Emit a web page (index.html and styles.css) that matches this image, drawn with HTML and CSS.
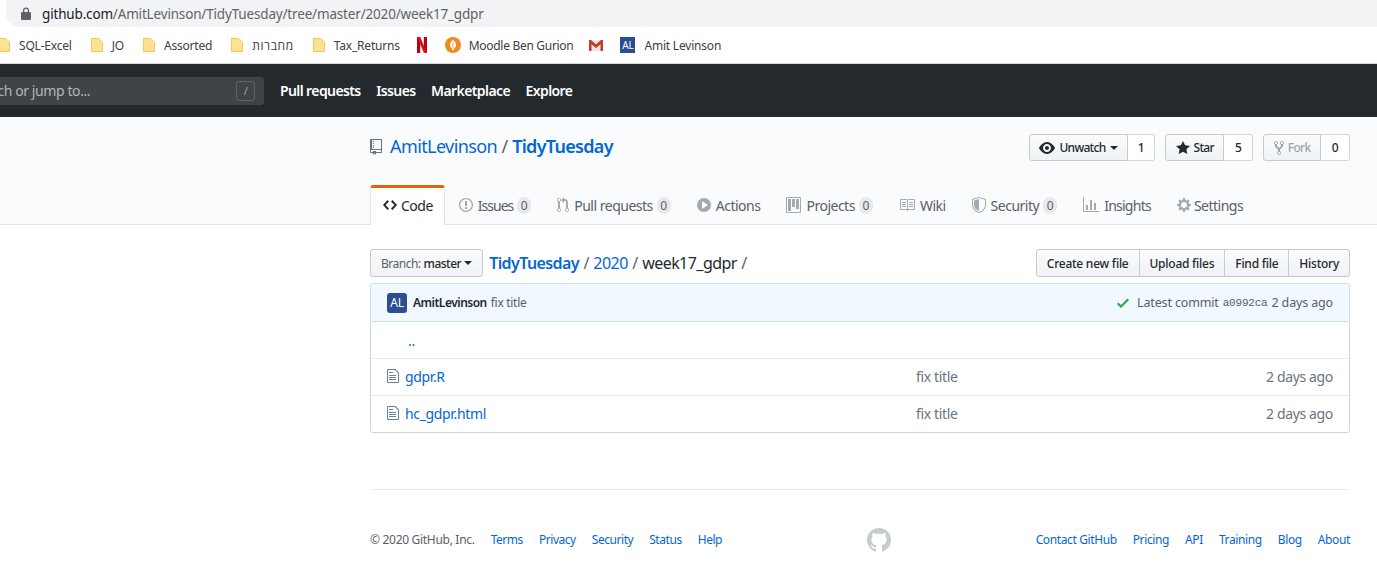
FILE: index.html
```html
<!DOCTYPE html>
<html>
<head>
    <meta charset="UTF-8">
    <title>TidyTuesday/2020/week17_gdpr at master</title>
    <link rel="stylesheet" href="styles.css">
</head>
<body>
    <svg class="defs" width="0" height="0">
        <symbol id="i-repo" viewBox="0 0 12 16"><path d="M4 9H3V8h1v1zm0-3H3v1h1V6zm0-2H3v1h1V4zm0-2H3v1h1V2zm8-1v12c0 .55-.45 1-1 1H6v2l-1.5-1.5L3 16v-2H1c-.55 0-1-.45-1-1V1c0-.55.45-1 1-1h10c.55 0 1 .45 1 1zm-1 10H1v2h2v-1h3v1h5v-2zm0-10H2v9h9V1z"/></symbol>
        <symbol id="i-code" viewBox="0 0 14 16"><path d="M9.5 3L8 4.5 11.5 8 8 11.5 9.5 13 14 8 9.5 3zm-5 0L0 8l4.5 5L6 11.5 2.5 8 6 4.5 4.5 3z"/></symbol>
        <symbol id="i-issue" viewBox="0 0 14 16"><path d="M7 2.3c3.14 0 5.7 2.56 5.7 5.7s-2.56 5.7-5.7 5.7A5.71 5.71 0 011.3 8c0-3.14 2.56-5.7 5.7-5.7zM7 1C3.14 1 0 4.14 0 8s3.14 7 7 7 7-3.14 7-7-3.14-7-7-7zm1 3H6v5h2V4zm0 6H6v2h2v-2z"/></symbol>
        <symbol id="i-pr" viewBox="0 0 12 16"><path d="M11 11.28V5c-.03-.78-.34-1.47-.94-2.06C9.46 2.35 8.78 2.03 8 2H7V0L4 3l3 3V4h1c.27.02.48.11.69.31.21.2.3.42.31.69v6.28A1.993 1.993 0 0010 15a1.993 1.993 0 001-3.72zm-1 2.92c-.66 0-1.2-.55-1.2-1.2 0-.65.55-1.2 1.2-1.2.65 0 1.2.55 1.2 1.2 0 .65-.55 1.2-1.2 1.2zM4 3c0-1.11-.89-2-2-2a1.993 1.993 0 00-1 3.72v6.56A1.993 1.993 0 002 15a1.993 1.993 0 001-3.72V4.72c.59-.34 1-.98 1-1.72zm-.8 10c0 .66-.55 1.2-1.2 1.2-.65 0-1.2-.55-1.2-1.2 0-.65.55-1.2 1.2-1.2.65 0 1.2.55 1.2 1.2zM2 4.2C1.34 4.2.8 3.65.8 3c0-.65.55-1.2 1.2-1.2.65 0 1.2.55 1.2 1.2 0 .65-.55 1.2-1.2 1.2z"/></symbol>
        <symbol id="i-play" viewBox="0 0 14 16"><path fill-rule="evenodd" d="M14 8A7 7 0 110 8a7 7 0 0114 0zm-8.223 3.482l4.599-3.066a.5.5 0 000-.832L5.777 4.518A.5.5 0 005 4.934v6.132a.5.5 0 00.777.416z"/></symbol>
        <symbol id="i-project" viewBox="0 0 15 16"><path fill-rule="evenodd" d="M10 12h3V2h-3v10zm-4-2h3V2H6v8zm-4 4h3V2H2v12zm-1 1h13V1H1v14zM14 0H1a1 1 0 00-1 1v14a1 1 0 001 1h13a1 1 0 001-1V1a1 1 0 00-1-1z"/></symbol>
        <symbol id="i-book" viewBox="0 0 16 16"><path d="M3 5h4v1H3V5zm0 3h4V7H3v1zm0 2h4V9H3v1zm11-5h-4v1h4V5zm0 2h-4v1h4V7zm0 2h-4v1h4V9zm2-6v9c0 .55-.45 1-1 1H9.5l-1 1-1-1H2c-.55 0-1-.45-1-1V3c0-.55.45-1 1-1h5.5l1 1 1-1H15c.55 0 1 .45 1 1zm-8 .5L7.5 3H2v9h6V3.5zm7-.5H9.5l-.5.5V12h6V3z"/></symbol>
        <symbol id="i-shield" viewBox="0 0 14 16"><path fill-rule="evenodd" d="M0 2l7-2 7 2v6.02C14 12.69 8.69 16 7 16c-1.69 0-7-3.31-7-7.98V2zm1 .75L7 1l6 1.75v5.268C13 12.104 8.449 15 7 15c-1.449 0-6-2.896-6-6.982V2.75zm1 .75L7 2v12c-1.207 0-5-2.482-5-5.985V3.5z"/></symbol>
        <symbol id="i-graph" viewBox="0 0 16 16"><path d="M16 14v1H0V0h1v14h15zM5 13H3V8h2v5zm4 0H7V3h2v10zm4 0h-2V6h2v7z"/></symbol>
        <symbol id="i-gear" viewBox="0 0 14 16"><path d="M14 8.77v-1.6l-1.94-.64-.45-1.09.88-1.84-1.13-1.13-1.81.91-1.09-.45-.69-1.92h-1.6l-.63 1.94-1.11.45-1.84-.88-1.13 1.13.91 1.81-.45 1.09L0 7.23v1.59l1.94.64.45 1.09-.88 1.84 1.13 1.13 1.81-.91 1.09.45.69 1.92h1.59l.63-1.94 1.11-.45 1.84.88 1.13-1.13-.92-1.81.47-1.09L14 8.75v.02zM7 11c-1.66 0-3-1.34-3-3s1.34-3 3-3 3 1.34 3 3-1.34 3-3 3z"/></symbol>
        <symbol id="i-eye" viewBox="0 0 16 16"><path d="M8.06 2C3 2 0 8 0 8s3 6 8.06 6C13 14 16 8 16 8s-3-6-7.94-6zM8 12c-2.2 0-4-1.78-4-4 0-2.2 1.8-4 4-4 2.22 0 4 1.8 4 4 0 2.22-1.78 4-4 4zm2-4c0 1.11-.89 2-2 2-1.11 0-2-.89-2-2 0-1.11.89-2 2-2 1.11 0 2 .89 2 2z"/></symbol>
        <symbol id="i-star" viewBox="0 0 14 16"><path d="M14 6l-4.9-.64L7 1 4.9 5.36 0 6l3.6 3.26L2.67 14 7 11.67 11.33 14l-.93-4.74L14 6z"/></symbol>
        <symbol id="i-fork" viewBox="0 0 10 16"><path d="M8 1a1.993 1.993 0 00-1 3.72V6L5 8 3 6V4.72A1.993 1.993 0 002 1a1.993 1.993 0 00-1 3.72V6.5l3 3v1.78A1.993 1.993 0 005 15a1.993 1.993 0 001-3.72V9.5l3-3V4.72A1.993 1.993 0 008 1zM2 4.2C1.34 4.2.8 3.65.8 3c0-.65.55-1.2 1.2-1.2.65 0 1.2.55 1.2 1.2 0 .65-.55 1.2-1.2 1.2zm3 10c-.66 0-1.2-.55-1.2-1.2 0-.65.55-1.2 1.2-1.2.65 0 1.2.55 1.2 1.2 0 .65-.55 1.2-1.2 1.2zm3-10c-.66 0-1.2-.55-1.2-1.2 0-.65.55-1.2 1.2-1.2.65 0 1.2.55 1.2 1.2 0 .65-.55 1.2-1.2 1.2z"/></symbol>
        <symbol id="i-file" viewBox="0 0 12 16"><path d="M6 5H2V4h4v1zM2 8h7V7H2v1zm0 2h7V9H2v1zm0 2h7v-1H2v1zm10-7.5V14c0 .55-.45 1-1 1H1c-.55 0-1-.45-1-1V2c0-.55.45-1 1-1h7.5L12 4.5zM11 5L8 2H1v12h10V5z"/></symbol>
        <symbol id="i-check" viewBox="0 0 12 16"><path d="M12 5l-8 8-4-4 1.5-1.5L4 10l6.5-6.5L12 5z"/></symbol>
        <symbol id="i-mark" viewBox="0 0 16 16"><path d="M8 0C3.58 0 0 3.58 0 8c0 3.54 2.29 6.53 5.47 7.59.4.07.55-.17.55-.38 0-.19-.01-.82-.01-1.49-2.01.37-2.53-.49-2.69-.94-.09-.23-.48-.94-.82-1.13-.28-.15-.68-.52-.01-.53.63-.01 1.08.58 1.23.82.72 1.21 1.87.87 2.33.66.07-.52.28-.87.51-1.07-1.78-.2-3.64-.89-3.64-3.95 0-.87.31-1.59.82-2.15-.08-.2-.36-1.02.08-2.12 0 0 .67-.21 2.2.82.64-.18 1.32-.27 2-.27.68 0 1.36.09 2 .27 1.53-1.04 2.2-.82 2.2-.82.44 1.1.16 1.92.08 2.12.51.56.82 1.27.82 2.15 0 3.07-1.87 3.75-3.65 3.95.29.25.54.73.54 1.48 0 1.07-.01 1.93-.01 2.2 0 .21.15.46.55.38A8.013 8.013 0 0016 8c0-4.42-3.58-8-8-8z"/></symbol>
        <symbol id="i-folder" viewBox="0 0 14 16"><path fill="#fde293" stroke="#f2c94c" d="M1.5 1.500h7l4 3.500v9.500h-11z"/></symbol>
    </svg>

    <div class="omnibox">
        <svg class="lock" viewBox="0 0 10 13" width="10" height="13"><path d="M2 5V3.500a3 3 0 016 0V5h1a1 1 0 011 1v6a1 1 0 01-1 1H1a1 1 0 01-1-1V6a1 1 0 011-1zm1.300 0h3.400V3.500a1.700 1.700 0 00-3.400 0z"/></svg>
        <span class="url"><b>github.com</b>/AmitLevinson/TidyTuesday/tree/master/2020/week17_gdpr</span>
    </div>

    <div class="bookmarks">
        <a class="bm bm-first"><svg class="folder"><use href="#i-folder"/></svg>SQL-Excel</a>
        <a class="bm"><svg class="folder"><use href="#i-folder"/></svg>JO</a>
        <a class="bm"><svg class="folder"><use href="#i-folder"/></svg>Assorted</a>
        <a class="bm"><svg class="folder"><use href="#i-folder"/></svg><span class="bm-he" dir="rtl">מחברות</span></a>
        <a class="bm"><svg class="folder"><use href="#i-folder"/></svg>Tax_Returns</a>
        <a class="bm bm-netflix"><svg viewBox="0 0 10 16" width="10" height="16"><path fill="#b1060f" d="M0 0h3.200v16L0 16z"/><path fill="#b1060f" d="M6.800 0H10v16l-3.200-.4z"/><path fill="#e50914" d="M0 0h3.200l6.800 16-3.200-.4z"/></svg></a>
        <a class="bm"><svg viewBox="0 0 16 16" width="16" height="16"><circle cx="8" cy="8" r="8" fill="#f28a1c"/><path fill="#fff" d="M8 2.500c2 2 3 3.500 3 5.500 0 1.700-1 3-2 3.500V13H7v-1.500C6 11 5 9.700 5 8c0-2 1-3.500 3-5.500z"/><path fill="#f28a1c" d="M7.600 5h.8v6h-.8z"/></svg><span class="bm-moodle">Moodle Ben Gurion</span></a>
        <a class="bm bm-gmail"><svg viewBox="0 0 14 11" width="14" height="11"><path fill="#e8e8e8" d="M0 0h14v11H0z"/><path fill="#c9362b" d="M0 0h2l5 4.500L12 0h2v11h-2.500V4.300L7 8 2.500 4.300V11H0z"/></svg></a>
        <a class="bm"><span class="bm-al">AL</span>Amit Levinson</a>
    </div>

    <header class="topnav">
        <div class="search">
            <span>Search or jump to...</span>
            <kbd>/</kbd>
        </div>
        <a>Pull requests</a>
        <a>Issues</a>
        <a>Marketplace</a>
        <a>Explore</a>
    </header>

    <section class="pagehead">
        <div class="container">
            <div class="repo-row">
                <h1 class="repo-title">
                    <svg class="ico-grey" width="12" height="16"><use href="#i-repo"/></svg>
                    <a>AmitLevinson</a><span class="sep">/</span><a class="strong">TidyTuesday</a>
                </h1>
                <div class="actions">
                    <div class="btn-group">
                        <a class="btn"><svg width="16" height="16"><use href="#i-eye"/></svg>Unwatch<i class="caret"></i></a>
                        <a class="count count-sm">1</a>
                    </div>
                    <div class="btn-group">
                        <a class="btn"><svg width="14" height="16"><use href="#i-star"/></svg>Star</a>
                        <a class="count">5</a>
                    </div>
                    <div class="btn-group">
                        <a class="btn disabled"><svg width="10" height="16"><use href="#i-fork"/></svg>Fork</a>
                        <a class="count">0</a>
                    </div>
                </div>
            </div>
            <nav class="tabs">
                <a class="tab selected"><svg width="14" height="16"><use href="#i-code"/></svg>Code</a>
                <a class="tab tab-issues"><svg width="14" height="16"><use href="#i-issue"/></svg>Issues<span class="counter">0</span></a>
                <a class="tab"><svg width="12" height="16"><use href="#i-pr"/></svg>Pull requests<span class="counter">0</span></a>
                <a class="tab"><svg width="14" height="16"><use href="#i-play"/></svg>Actions</a>
                <a class="tab"><svg width="15" height="16"><use href="#i-project"/></svg>Projects<span class="counter">0</span></a>
                <a class="tab"><svg width="16" height="16"><use href="#i-book"/></svg>Wiki</a>
                <a class="tab"><svg width="14" height="16"><use href="#i-shield"/></svg>Security<span class="counter">0</span></a>
                <a class="tab tab-insights"><svg width="16" height="16"><use href="#i-graph"/></svg>Insights</a>
                <a class="tab tab-settings"><svg width="14" height="16"><use href="#i-gear"/></svg>Settings</a>
            </nav>
        </div>
    </section>

    <main class="container">
        <div class="file-nav">
            <a class="btn branch"><span class="branch-label">Branch:</span> master<i class="caret"></i></a>
            <div class="crumbs">
                <a class="strong">TidyTuesday</a><span class="sep">/</span><a>2020</a><span class="sep">/</span><b>week17_gdpr</b><span class="sep">/</span>
            </div>
            <div class="file-btns">
                <a class="btn">Create new file</a>
                <a class="btn">Upload files</a>
                <a class="btn">Find file</a>
                <a class="btn">History</a>
            </div>
        </div>

        <div class="commit-tease">
            <span class="avatar">AL</span>
            <a class="author">AmitLevinson</a>
            <span class="msg">fix title</span>
            <span class="latest">
                <svg class="check" width="12" height="16"><use href="#i-check"/></svg>
                Latest commit <code>a0992ca</code> 2 days ago
            </span>
        </div>
        <div class="files">
            <div class="row up"><a>..</a></div>
            <div class="row">
                <span class="name"><svg width="12" height="16"><use href="#i-file"/></svg><a>gdpr.R</a></span>
                <span class="message">fix title</span>
                <span class="age">2 days ago</span>
            </div>
            <div class="row">
                <span class="name"><svg width="12" height="16"><use href="#i-file"/></svg><a>hc_gdpr.html</a></span>
                <span class="message">fix title</span>
                <span class="age">2 days ago</span>
            </div>
        </div>

        <footer class="footer">
            <div class="foot-links">
                <span class="copy">© 2020 GitHub, Inc.</span>
                <a>Terms</a><a>Privacy</a><a>Security</a><a>Status</a><a>Help</a>
            </div>
            <svg class="foot-mark" width="24" height="24"><use href="#i-mark"/></svg>
            <div class="foot-links foot-right">
                <a>Contact GitHub</a><a>Pricing</a><a>API</a><a>Training</a><a>Blog</a><a>About</a>
            </div>
        </footer>
    </main>
</body>
</html>
```

FILE: styles.css
```css
* {
    margin: 0;
    padding: 0;
    box-sizing: border-box;
}

html, body {
    height: 572px;
    overflow: hidden;
}

body {
    background: #fff;
    color: #24292e;
    font-family: "Noto Sans", "Open Sans", "DejaVu Sans", sans-serif;
    font-size: 14px;
    letter-spacing: -0.35px;
}

a {
    color: #0366d6;
    text-decoration: none;
}

svg {
    fill: currentColor;
    flex: none;
}

.defs {
    position: absolute;
}

/* browser chrome */
.omnibox {
    display: flex;
    align-items: center;
    height: 27px;
    margin-left: 6px;
    padding-left: 15px;
    background: #f1f3f4;
    border-radius: 0 0 0 14px;
    color: #5f6368;
}

.lock {
    fill: #5f6368;
    margin-right: 11px;
}

.url {
    font-size: 13.5px;
    letter-spacing: -0.17px;
}

.url b {
    color: #202124;
    font-weight: 400;
}

.bookmarks {
    display: flex;
    align-items: center;
    height: 37px;
    border-bottom: 1px solid #d4d6d8;
    font-size: 12px;
    letter-spacing: -0.2px;
    color: #3c4043;
}

.bm {
    display: flex;
    align-items: center;
    color: #3c4043;
    margin-left: 18px;
}

.bm-first {
    margin-left: -3px;
}

.folder {
    width: 14px;
    height: 16px;
    margin-right: 8px;
}

.bm-he {
    letter-spacing: 0.6px;
}

.bm-netflix {
    margin-left: 17px;
}

.bm-moodle {
    margin-left: 8px;
    letter-spacing: -0.3px;
}

.bm-gmail {
    margin-left: 16px;
    margin-right: -1px;
}

.bm-al {
    width: 15px;
    height: 16px;
    margin-right: 9px;
    background: #2b4f8e;
    color: #fff;
    font-size: 10px;
    line-height: 16px;
    text-align: center;
}

/* github header */
.topnav {
    display: flex;
    align-items: center;
    height: 53px;
    background: #24292e;
    font-weight: 600;
    letter-spacing: -0.6px;
}

.topnav a {
    color: #fff;
    margin-right: 15.5px;
}

.search {
    display: flex;
    align-items: center;
    justify-content: space-between;
    width: 300px;
    height: 28px;
    margin-left: -36px;
    margin-right: 16px;
    padding: 0 9px 0 6px;
    background: #3f4448;
    border-radius: 3px;
    color: #b3b5b7;
    font-weight: 400;
    letter-spacing: -0.4px;
}

.search kbd {
    width: 19px;
    height: 20px;
    border: 1px solid #5e6266;
    border-radius: 3px;
    color: #a0a3a6;
    font: 11px/18px "Noto Sans", sans-serif;
    text-align: center;
}

.container {
    width: 980px;
    margin-left: 370px;
}

/* repo head */
.pagehead {
    height: 108px;
    background: #fafbfc;
    border-bottom: 1px solid #e1e4e8;
}

.repo-row {
    display: flex;
    justify-content: space-between;
    padding-top: 17px;
    height: 68px;
}

.repo-title {
    display: flex;
    align-items: center;
    height: 24px;
    font-size: 18px;
    font-weight: 400;
    letter-spacing: -0.6px;
}

.repo-title svg {
    margin-right: 8px;
    margin-top: 2px;
}

.repo-title .strong {
    letter-spacing: -0.7px;
}

.sep {
    margin: 0 4.5px;
    color: #586069;
    font-weight: 400;
}

.strong {
    font-weight: 600;
}

.ico-grey {
    color: #6a737d;
}

.actions {
    display: flex;
    gap: 10px;
}

.btn-group {
    display: flex;
    height: 27px;
    font-size: 12px;
    font-weight: 500;
}

.btn {
    display: flex;
    align-items: center;
    gap: 4px;
    padding: 0 10px;
    background: linear-gradient(#fafbfc, #eff3f6);
    border: 1px solid #c8cbce;
    border-radius: 3px;
    color: #24292e;
    font-size: 12px;
    font-weight: 500;
    letter-spacing: -0.25px;
}

.btn-group .btn {
    padding: 0 9.5px;
    border-radius: 3px 0 0 3px;
    letter-spacing: -0.7px;
}

.btn.disabled {
    color: #a0a4a8;
}

.caret {
    width: 0;
    height: 0;
    border: 4px solid transparent;
    border-top-color: currentColor;
    border-bottom: 0;
}

.count {
    display: flex;
    align-items: center;
    justify-content: center;
    width: 29px;
    background: #fff;
    border: 1px solid #d1d5da;
    border-left: 0;
    border-radius: 0 3px 3px 0;
    color: #24292e;
}

.count-sm {
    width: 27px;
}

.tabs {
    display: flex;
    height: 40px;
}

.tab {
    display: flex;
    align-items: center;
    gap: 5px;
    padding: 0 13px;
    color: #586069;
    letter-spacing: -0.5px;
    white-space: nowrap;
}

.tab svg {
    color: #a3aab1;
}

.tab.selected {
    gap: 4px;
    background: #fff;
    border: 1px solid #e1e4e8;
    border-top: 3px solid #e36209;
    border-bottom: 0;
    border-radius: 3px 3px 0 0;
    padding: 0 11px 3px 12px;
    color: #24292e;
}

.tab.selected svg {
    color: #24292e;
}

.tab-issues {
    padding-left: 14px;
    letter-spacing: -1px;
}

.tab-insights {
    letter-spacing: -0.75px;
}

.tab-settings {
    gap: 3px;
}

.counter {
    min-width: 14px;
    height: 17px;
    margin-left: -1px;
    padding: 0 3px;
    background: rgba(27, 31, 35, .08);
    border-radius: 9px;
    color: #586069;
    font-size: 12px;
    letter-spacing: 0;
    line-height: 17px;
    text-align: center;
}

/* file navigation */
.file-nav {
    display: flex;
    align-items: center;
    height: 28px;
    margin-top: 24px;
    margin-bottom: 6px;
}

.file-nav .btn {
    height: 28px;
}

.file-nav .branch {
    gap: 3px;
    margin-right: 6px;
    letter-spacing: -0.5px;
}

.branch-label {
    color: #586069;
    font-weight: 400;
}

.crumbs {
    display: flex;
    align-items: center;
    flex: 1;
    font-size: 16px;
    letter-spacing: -0.55px;
}

.crumbs .strong {
    letter-spacing: -0.6px;
}

.crumbs b {
    font-weight: 400;
    color: #24292e;
}

.file-btns {
    display: flex;
}

.file-btns .btn {
    border-radius: 0;
    margin-left: -1px;
}

.file-btns .btn:first-child {
    border-radius: 3px 0 0 3px;
}

.file-btns .btn:last-child {
    border-radius: 0 3px 3px 0;
}

.commit-tease {
    display: flex;
    align-items: center;
    height: 39px;
    padding: 0 16px;
    background: #f1f8ff;
    border: 1px solid #c8e1ff;
    border-radius: 3px 3px 0 0;
    font-size: 12px;
    letter-spacing: -0.3px;
    color: #586069;
}

.avatar {
    width: 20px;
    height: 20px;
    margin-right: 6px;
    background: #2b4f8e;
    border-radius: 3px;
    color: #fff;
    font-size: 12px;
    line-height: 20px;
    text-align: center;
}

.author {
    margin-right: 4px;
    color: #24292e;
    font-weight: 600;
    letter-spacing: -0.5px;
}

.latest {
    display: flex;
    align-items: center;
    gap: 4px;
    margin-left: auto;
    font-size: 12.5px;
    letter-spacing: -0.15px;
}

.check {
    color: #28a745;
    margin-right: 4px;
}

.latest code {
    font: 11px "Liberation Mono", monospace;
    letter-spacing: -0.2px;
}

.files {
    border: 1px solid #d1d5da;
    border-top: 0;
    border-radius: 0 0 3px 3px;
}

.row {
    display: flex;
    align-items: center;
    height: 37px;
    padding: 0 16px 2px;
    color: #6a737d;
}

.row + .row {
    border-top: 1px solid #eaecef;
}

.up {
    height: 36px;
    padding: 0 0 0 37px;
}

.name {
    display: flex;
    align-items: center;
    gap: 6px;
    width: 529px;
}

.name svg {
    color: #6a8199;
}

.age {
    margin-left: auto;
}

/* footer */
.footer {
    display: flex;
    justify-content: space-between;
    align-items: center;
    height: 100px;
    margin-top: 56px;
    border-top: 1px solid #eaecef;
    font-size: 12px;
    letter-spacing: -0.45px;
}

.foot-links {
    display: flex;
    gap: 16px;
}

.foot-right {
    letter-spacing: -0.38px;
}

.copy {
    color: #586069;
    letter-spacing: -0.3px;
}

.foot-mark {
    color: #c6cbd1;
}
```
